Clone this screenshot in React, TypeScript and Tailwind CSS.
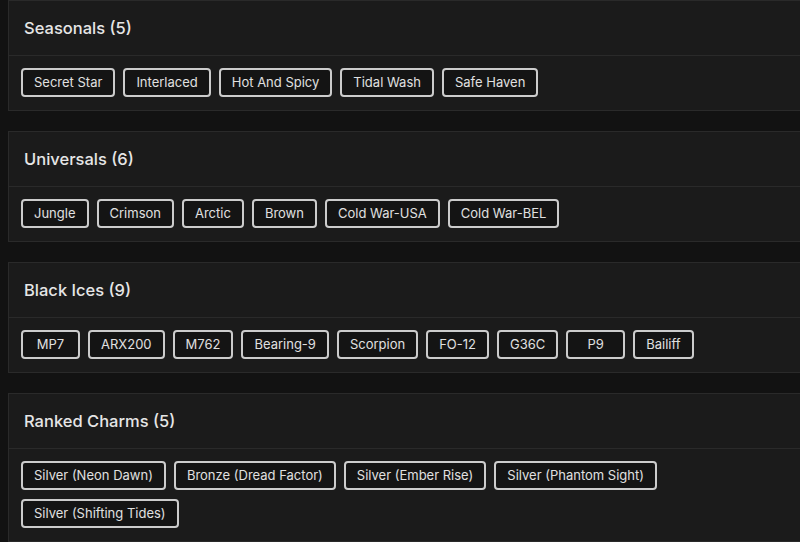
import React from 'react';

interface Category {
  title: string;
  items: string[];
}

const categories: Category[] = [
  { title: 'Seasonals', items: ['Secret Star', 'Interlaced', 'Hot And Spicy', 'Tidal Wash', 'Safe Haven'] },
  { title: 'Universals', items: ['Jungle', 'Crimson', 'Arctic', 'Brown', 'Cold War-USA', 'Cold War-BEL'] },
  {
    title: 'Black Ices',
    items: ['MP7', 'ARX200', 'M762', 'Bearing-9', 'Scorpion', 'FO-12', 'G36C', 'P9', 'Bailiff'],
  },
  {
    title: 'Ranked Charms',
    items: [
      'Silver (Neon Dawn)',
      'Bronze (Dread Factor)',
      'Silver (Ember Rise)',
      'Silver (Phantom Sight)',
      'Silver (Shifting Tides)',
    ],
  },
];

const CategoryCard: React.FC<{ category: Category }> = ({ category }) => (
  <section className="bg-[#1b1b1b] border border-[#2a2a2a] w-[800px] shrink-0">
    <div className="h-[55px] flex items-center pl-[15px] border-b border-[#2a2a2a]">
      <h2 className="text-[16.5px] font-medium text-[#e6e6e6]">
        {category.title} ({category.items.length})
      </h2>
    </div>
    <div className="flex flex-wrap gap-x-2 gap-y-[9px] px-3 pt-3 pb-[13px]">
      {category.items.map((item) => (
        <span
          key={item}
          className="h-[29px] min-w-[59px] flex items-center justify-center px-[11px] border-2 border-[#cccccc] rounded-[4px] bg-[#141414] text-[13px] text-[#e0e0e0]"
        >
          {item}
        </span>
      ))}
    </div>
  </section>
);

export default function App() {
  return (
    <div
      className="h-[542px] bg-[#121212] pl-2 flex flex-col gap-[20px] overflow-hidden"
      style={{ fontFamily: 'Inter, "Open Sans", sans-serif' }}
    >
      {categories.map((c) => (
        <CategoryCard key={c.title} category={c} />
      ))}
    </div>
  );
}
